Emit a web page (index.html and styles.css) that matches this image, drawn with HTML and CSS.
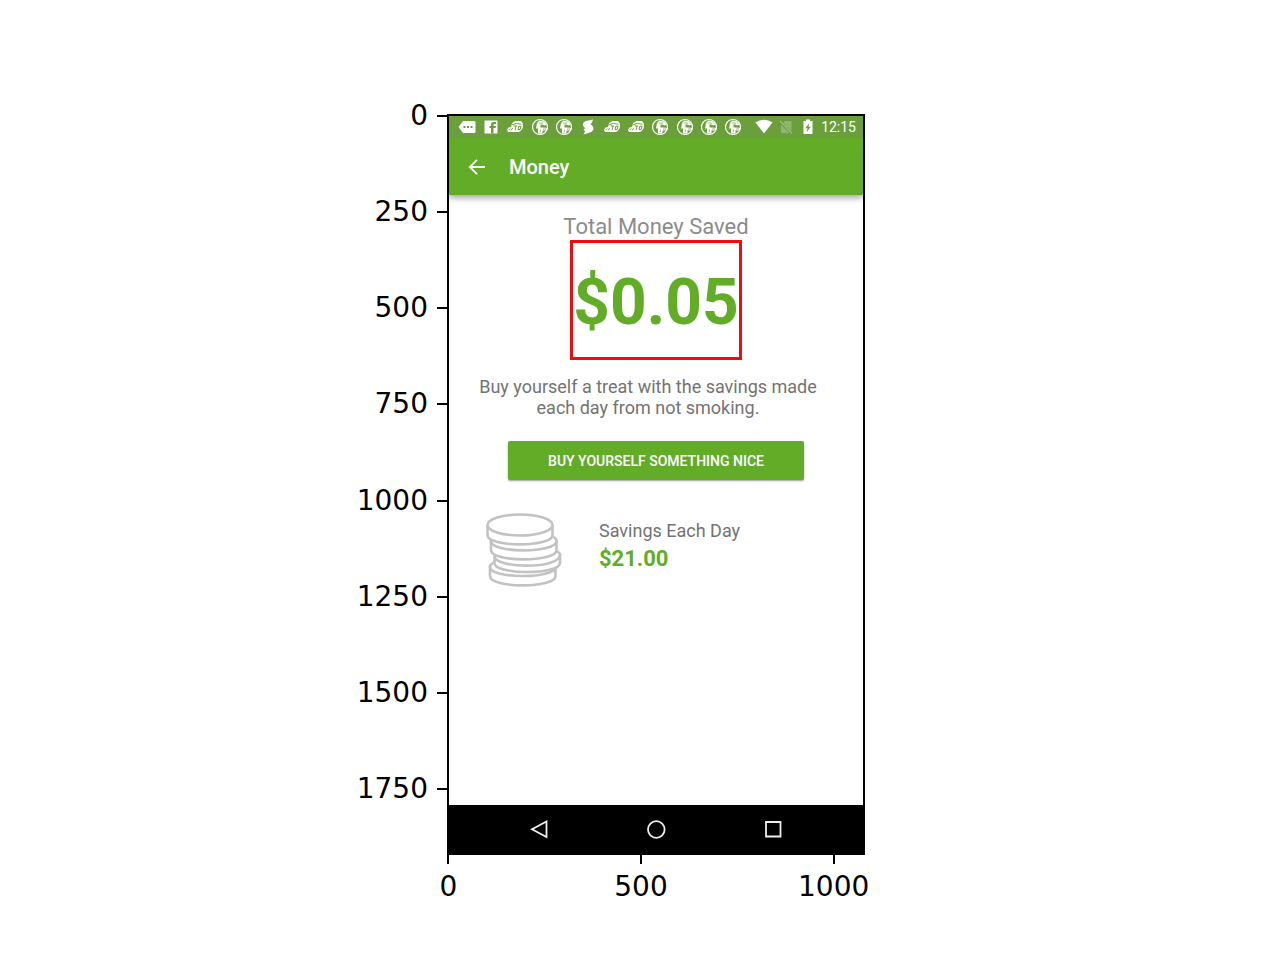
FILE: index.html
```html
<!DOCTYPE html>
<html lang="en">
<head>
<meta charset="utf-8">
<title>Money</title>
<meta name="viewport" content="width=device-width, initial-scale=1">
<link rel="stylesheet" href="styles.css">
</head>
<body>
<svg class="symbols" aria-hidden="true">
  <symbol id="race" viewBox="0 0 18 18">
    <path d="M6 5.500Q7.500 3 10 3H14.500Q17 4 17 7.500T15.500 12L13 14H2L1 12 2.500 9.500 5 9Z" fill="#fff"/>
    <path d="M6 6.800Q10 4.300 15.500 6.300M7.500 8H11.200M10 8 9 12.300M15 8 14.200 11.500H12L12.800 8.300H15M2.800 12 4.200 10.500M5 12.300 6.800 10" fill="none" stroke="#6a9f3b" stroke-width="1"/>
  </symbol>
  <symbol id="globe" viewBox="0 0 18 18">
    <circle cx="9" cy="9" r="7.500" fill="none" stroke="#fff" stroke-width="1.200"/>
    <path d="M6 5 8.500 2.500 13 3.500 15.500 6.500 13.500 7.500 11 6.500H9.500V9.500H12L17 10 16 12.500H11.500V15.500H7V10.500H5Z" fill="#fff"/>
    <path d="M8 5 12.500 5.200M12 11H15M9.300 11.500V14" fill="none" stroke="#6a9f3b" stroke-width=".7"/>
  </symbol>
</svg>
<main class="figure">
  <ol class="y-axis">
    <li>0</li><li>250</li><li>500</li><li>750</li><li>1000</li><li>1250</li><li>1500</li><li>1750</li>
  </ol>
  <section class="phone">
    <div class="status">
      <div class="notices">
        <svg viewBox="0 0 18 18"><path d="M5 3H16Q17.500 3 17.500 4.500V13.500Q17.500 15 16 15H5L.5 9Z" fill="#fff"/><path d="M5.500 8h2v2h-2zM9 8h2v2H9zM12.500 8h2v2h-2z" fill="#6a9f3b"/></svg>
        <svg viewBox="0 0 18 18"><path d="M2.500 2.500H15.500V15.500H2.500Z" fill="#fff"/><path d="M9 15.500V10H7.500V8H9V6.500Q9 4 11.500 4H14V6H12.500Q11.500 6 11.500 7V8H14L13.500 10H11.500V15.500Z" fill="#6a9f3b"/></svg>
        <svg><use href="#race"/></svg>
        <svg><use href="#globe"/></svg>
        <svg><use href="#globe"/></svg>
        <svg viewBox="0 0 18 18"><path d="M14 1.500 13 4.500 11.500 6 14 8.500Q15.500 13 11 14.500L4.500 16.500 6 13.500 4.500 11 6.500 10.500 4.500 8.500Q2.500 4.500 7 3Z" fill="#fff"/></svg>
        <svg><use href="#race"/></svg>
        <svg><use href="#race"/></svg>
        <svg><use href="#globe"/></svg>
        <svg><use href="#globe"/></svg>
        <svg><use href="#globe"/></svg>
        <svg><use href="#globe"/></svg>
      </div>
      <div class="system">
        <svg viewBox="0 0 18 18"><path d="M.5 4.500Q9-1 17.500 4.500L9 15.500Z" fill="#fff"/></svg>
        <svg viewBox="0 0 18 18"><path d="M8 3H14.500V15H4V7Z" fill="#8fb66c"/><path d="M2 3 15.500 16" stroke="#6a9f3b" stroke-width="2.500"/><path d="M3 3 15 15.500" stroke="#9abd7c" stroke-width="1.200"/></svg>
        <svg viewBox="0 0 18 18"><path d="M4.500 3H7V1.500H11V3H13.500V16H4.500Z" fill="#fff"/><path d="M10.300 5 6.300 10.200H8.500L7.700 14.200 11.700 8.800H9.500Z" fill="#6a9f3b"/></svg>
        <time>12:15</time>
      </div>
    </div>
    <header class="toolbar">
      <button class="back" aria-label="Back"><svg viewBox="0 0 18 18"><path d="M17 9H2M9 1.800 1.800 9 9 16.200" fill="none" stroke="#fff" stroke-width="1.800"/></svg></button>
      <h1>Money</h1>
    </header>
    <div class="content">
      <h2>Total Money Saved</h2>
      <p class="total">$0.05</p>
      <p class="message">Buy yourself a treat with the savings made each day from not smoking.</p>
      <button class="buy">BUY YOURSELF SOMETHING NICE</button>
      <div class="daily">
        <svg class="coins" viewBox="0 0 76 74" fill="#fff" stroke="#c2c2c2" stroke-width="2.600">
          <path d="M4 53V63C4 75.500 69.500 75.500 69.500 63V53"/><path d="M4 54C4 66 69.500 66 69.500 54C69.500 42 4 42 4 54Z"/>
          <path d="M8.500 44V50C8.500 62 74 62 74 50V41"/><path d="M8.500 43C8.500 56 74 56 74 42C74 30 8.500 31 8.500 43Z"/>
          <path d="M5 27V37C5 49.500 70.500 49.500 70.500 37V27"/><path d="M5 28C5 40.500 70.500 40.500 70.500 28C70.500 16 5 16 5 28Z"/>
          <path d="M1.500 12V22C1.500 34.500 66.500 34.500 66.500 22V12"/><ellipse cx="34" cy="12" rx="32.500" ry="10.500"/>
        </svg>
        <dl>
          <dt>Savings Each Day</dt>
          <dd>$21.00</dd>
        </dl>
      </div>
    </div>
    <nav class="navbar">
      <button aria-label="Back"><svg viewBox="0 0 20 20"><path d="M17.500 2.500V18L3 10.200Z"/></svg></button>
      <button aria-label="Home"><svg viewBox="0 0 20 20"><circle cx="10.300" cy="10.500" r="8.300"/></svg></button>
      <button aria-label="Recent apps"><svg viewBox="0 0 20 20"><path d="M3 3H17.500V17.500H3Z"/></svg></button>
    </nav>
  </section>
  <ol class="x-axis"><li>0</li><li>500</li><li>1000</li></ol>
</main>
</body>
</html>
```
FILE: styles.css
```css
* { box-sizing: border-box; }
body { margin: 0; background: #fff; font-family: Roboto, sans-serif; }
h1, h2, p, ol, dl, dd { margin: 0; padding: 0; }
ol { list-style: none; font: 28px/32px "DejaVu Sans", sans-serif; color: #000; }
button { border: 0; padding: 0; background: none; font-family: inherit; }
svg { display: block; }
.symbols { display: none; }

.figure {
  display: grid;
  grid-template-columns: 97px 1fr 65px;
  max-width: 580px;
  margin: 0 auto;
  padding-top: 67px;
}
.y-axis { display: flex; flex-direction: column; height: 770px; }
.y-axis li { flex: 1; display: flex; align-items: center; justify-content: flex-end; gap: 9px; padding-top: 1px; }
.y-axis li::after { content: ""; width: 10px; height: 2px; background: #000; }
.x-axis { grid-column: 1 / -1; display: grid; grid-template-columns: repeat(3, 1fr); padding-left: 2px; }
.x-axis li { display: flex; flex-direction: column; align-items: center; gap: 7px; }
.x-axis li::before { content: ""; width: 2px; height: 9px; background: #000; }

.phone {
  display: flex;
  flex-direction: column;
  min-height: 741px;
  margin-top: 47px;
  border: 2px solid #000;
}
.status {
  display: flex;
  justify-content: space-between;
  align-items: center;
  height: 22px;
  padding: 0 7px 0 9px;
  background: #6a9f3b;
}
.notices, .system { display: flex; align-items: center; }
.notices { flex: 0 1 284px; justify-content: space-between; }
.status svg { width: 18px; height: 18px; }
.system { gap: 4px; color: #fff; font-size: 14px; line-height: 22px; }
.toolbar {
  display: flex;
  align-items: center;
  gap: 23px;
  height: 57px;
  padding: 0 19px;
  background: #62ac28;
  box-shadow: 0 3px 6px rgba(0, 0, 0, 0.35);
  clip-path: inset(0 0 -12px);
  color: #fff;
}
.toolbar svg { width: 18px; height: 18px; }
.toolbar h1 { font-size: 20px; line-height: 24px; font-weight: 500; }

.content { flex: 1; display: flex; flex-direction: column; align-items: center; padding: 19px 24px 16px; color: #737373; }
.content h2 { font-size: 22px; line-height: 26px; font-weight: 400; color: #8c8c8c; }
.total { padding-top: 6px; border: 3px solid #f00c0c; font-size: 64px; line-height: 108px; font-weight: 700; color: #62ac28; }
.message { margin-top: 16px; padding-right: 16px; font-size: 18px; line-height: 21px; text-align: center; }
.buy {
  width: 296px;
  max-width: 100%;
  height: 39px;
  margin-top: 23px;
  border-radius: 2px;
  background: #62ac28;
  box-shadow: 0 1px 2px rgba(0, 0, 0, 0.4);
  color: #fff;
  font-size: 14px;
  font-weight: 500;
}
.daily { align-self: stretch; display: flex; align-items: flex-start; gap: 37px; margin-top: 33px; padding-left: 13px; }
.coins { width: 76px; height: 74px; }
.daily dl { padding-top: 4px; line-height: 28px; }
.daily dt { font-size: 18px; }
.daily dd { font-size: 22px; font-weight: 700; color: #62ac28; }

.navbar { display: grid; grid-template-columns: repeat(3, 117px); justify-content: center; height: 48px; background: #000; }
.navbar button { display: flex; align-items: center; justify-content: center; }
.navbar svg { width: 20px; height: 20px; fill: none; stroke: #eee; stroke-width: 1.8; }
```
